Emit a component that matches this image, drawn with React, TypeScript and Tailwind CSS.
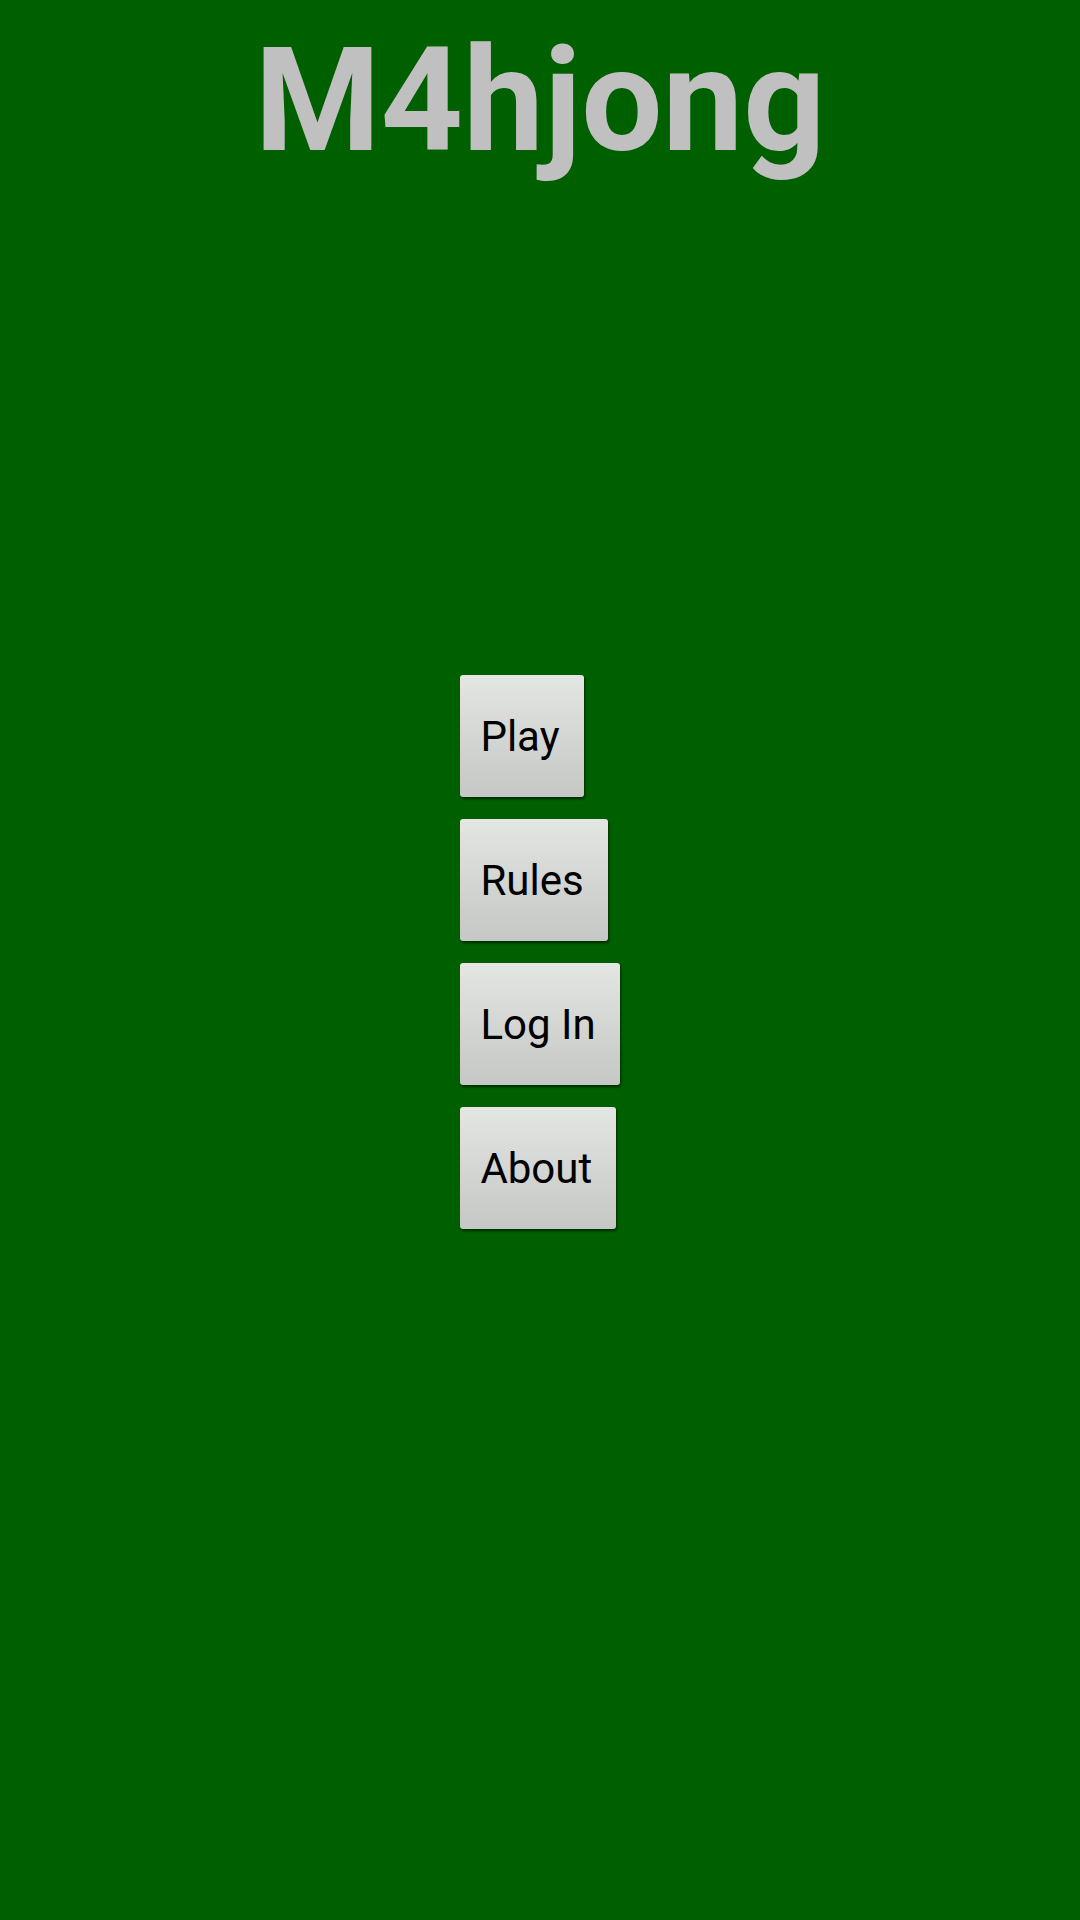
const items = ["Play", "Rules", "Log In", "About"];

export default function App() {
  return (
    <main className="min-h-[1920px] w-full bg-[#006000] font-['Roboto',sans-serif]">
      <h1 className="pt-[29px] text-center text-[144px] font-bold leading-none text-[#c0c0c0]">
        M4hjong
      </h1>

      <div className="mt-[502px] flex justify-center">
        <div className="flex flex-col items-start gap-[22px]">
          {items.map((label) => (
            <button
              key={label}
              className="flex h-[122px] items-center rounded-[3px] bg-gradient-to-b from-[#e4e6e3] to-[#c4c7c3] pl-[20px] pr-[24px] text-[42px] text-black shadow-[1px_2px_3px_rgba(0,0,0,0.55)]"
            >
              {label}
            </button>
          ))}
        </div>
      </div>
    </main>
  );
}
